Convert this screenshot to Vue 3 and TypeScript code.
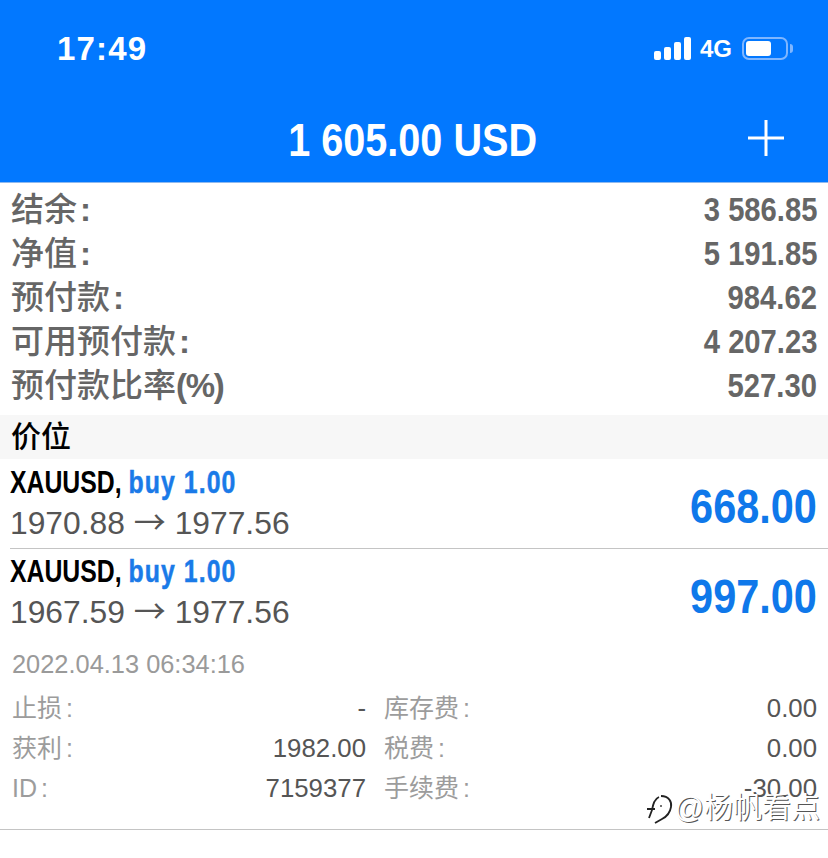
<template>
  <div class="screen">
    <header class="top">
      <div class="status">
        <span class="clock">17:49</span>
        <div class="status-right">
          <div class="signal"><i></i><i></i><i></i><i></i></div>
          <span class="net">4G</span>
          <div class="battery"><div class="battery-level"></div></div>
          <div class="battery-cap"></div>
        </div>
      </div>
      <div class="title-bar">
        <span class="title">1 605.00 USD</span>
        <svg class="plus" width="36" height="36" viewBox="0 0 36 36">
          <path d="M18 0V36M0 18H36" stroke="#fff" stroke-width="3" fill="none" />
        </svg>
      </div>
    </header>

    <section class="summary">
      <div v-for="row in summary" :key="row.label" class="summary-row">
        <span class="summary-label">{{ row.label }}<span v-if="row.colon" class="colon">:</span><span v-if="row.suffix" class="suffix">{{ row.suffix }}</span></span>
        <span class="summary-value">{{ row.value }}</span>
      </div>
    </section>

    <div class="section-head">价位</div>

    <div v-for="(p, i) in positions" :key="i" class="position" :class="{ last: i === positions.length - 1 }">
      <div class="pos-left">
        <div class="pos-name"><span class="pos-name-inner">XAUUSD, <span class="buy">buy 1.00</span></span></div>
        <div class="pos-price">{{ p.open }} <span class="arrow">→</span> {{ p.close }}</div>
      </div>
      <div class="pos-profit">{{ p.profit }}</div>
    </div>

    <div class="date">2022.04.13 06:34:16</div>

    <div class="details">
      <div v-for="d in details" :key="d.left" class="detail-row">
        <div class="detail-cell left-cell">
          <span class="detail-label">{{ d.left }}<span class="colon-small">:</span></span>
          <span>{{ d.leftValue }}</span>
        </div>
        <div class="detail-cell right-cell">
          <span class="detail-label">{{ d.right }}<span class="colon-small">:</span></span>
          <span>{{ d.rightValue }}</span>
        </div>
      </div>
      <div class="watermark">
        <svg class="watermark-icon" width="30" height="32" viewBox="0 0 30 32">
          <path d="M16 2C24 2 27 8 26 13C25 19 21 23 17 25L10 29M14 3C9 5 8 11 7 16L4 24M2 15H10" stroke="#222" stroke-width="1.8" fill="none" />
          <circle cx="16" cy="12" r="1" fill="#444" />
        </svg>
        <span>@杨帆看点</span>
      </div>
    </div>
  </div>
</template>

<script setup lang="ts">
const summary = [
  { label: '结余', value: '3 586.85', colon: true },
  { label: '净值', value: '5 191.85', colon: true },
  { label: '预付款', value: '984.62', colon: true },
  { label: '可用预付款', value: '4 207.23', colon: true },
  { label: '预付款比率', suffix: '(%)', value: '527.30', colon: false }
]

const positions = [
  { open: '1970.88', close: '1977.56', profit: '668.00' },
  { open: '1967.59', close: '1977.56', profit: '997.00' }
]

const details = [
  { left: '止损', leftValue: '-', right: '库存费', rightValue: '0.00' },
  { left: '获利', leftValue: '1982.00', right: '税费', rightValue: '0.00' },
  { left: 'ID', leftValue: '7159377', right: '手续费', rightValue: '-30.00' }
]
</script>

<style>
html,
body {
  margin: 0;
  background: #fff;
}
</style>

<style scoped>
.screen {
  width: 828px;
  height: 858px;
  overflow: hidden;
  background: #fff;
  font-family: 'Liberation Sans', 'Noto Sans CJK SC', sans-serif;
}

.top {
  height: 182px;
  background: #0278ff;
  border-bottom: 1px solid #8fb9ee;
  color: #fff;
}

.status {
  height: 97px;
  display: flex;
  align-items: center;
  justify-content: space-between;
  padding: 0 35px 0 57px;
}

.clock {
  font-size: 33px;
  font-weight: 700;
  letter-spacing: 1.2px;
}

.status-right {
  display: flex;
  align-items: center;
}

.signal {
  display: flex;
  align-items: flex-end;
  gap: 3px;
  height: 23px;
  margin-right: 9px;
}

.signal i {
  width: 7px;
  border-radius: 2px;
  background: #fff;
}

.signal i:nth-child(1) { height: 9px; }
.signal i:nth-child(2) { height: 13px; }
.signal i:nth-child(3) { height: 18px; }
.signal i:nth-child(4) { height: 23px; }

.net {
  font-size: 24px;
  font-weight: 700;
  margin-right: 10px;
}

.battery {
  width: 46px;
  height: 23px;
  box-sizing: border-box;
  border: 2px solid #7fb6ff;
  border-radius: 7px;
  padding: 2px;
}

.battery-level {
  width: 25px;
  height: 15px;
  background: #fff;
  border-radius: 3px;
}

.battery-cap {
  width: 3px;
  height: 9px;
  margin-left: 2px;
  background: #7fb6ff;
  border-radius: 0 3px 3px 0;
}

.title-bar {
  position: relative;
  height: 85px;
  display: flex;
  align-items: flex-start;
  justify-content: center;
}

.title {
  font-size: 47px;
  font-weight: 700;
  line-height: 54px;
  margin-top: 16px;
  margin-left: -2px;
  transform: scaleX(0.843);
}

.plus {
  position: absolute;
  right: 44px;
  top: 23px;
}

.summary {
  padding: 5px 11px 7px 11px;
  color: #666;
}

.summary-row {
  height: 44px;
  line-height: 40px;
  display: flex;
  align-items: center;
  justify-content: space-between;
  font-size: 33px;
}

.summary-label {
  font-weight: 500;
}

.colon {
  font-weight: 700;
  margin-left: 3px;
}

.suffix {
  font-weight: 700;
  letter-spacing: -1.3px;
}

.summary-value {
  font-weight: 700;
  transform: scaleX(0.885);
  transform-origin: right center;
}

.section-head {
  height: 44px;
  line-height: 44px;
  padding-left: 11px;
  background: #f7f7f7;
  color: #000;
  font-size: 30px;
  font-weight: 500;
}

.position {
  height: 90px;
  box-sizing: border-box;
  margin-left: 10px;
  padding-right: 11px;
  border-bottom: 1px solid #c4c4c4;
  display: flex;
  align-items: center;
  justify-content: space-between;
}

.position.last {
  height: 88px;
  border-bottom: none;
}

.pos-left {
  margin-top: -2px;
}

.pos-name {
  font-size: 32px;
  line-height: 38px;
  padding-bottom: 2px;
  color: #000;
  font-weight: 700;
}

.pos-name-inner {
  display: inline-block;
  transform: scaleX(0.775);
  transform-origin: left center;
  white-space: nowrap;
}

.buy {
  color: #1a7ae8;
  letter-spacing: 1.4px;
  -webkit-text-stroke: 0.5px #1a7ae8;
}

.pos-price {
  font-size: 31.8px;
  line-height: 40px;
  color: #555;
}

.arrow {
  font-family: 'Noto Sans CJK SC', sans-serif;
  font-size: 32px;
  font-weight: 400;
  line-height: 0;
}

.pos-profit {
  font-size: 48px;
  font-weight: 700;
  color: #0f78ea;
  margin-top: 6px;
  transform: scaleX(0.863);
  transform-origin: right center;
}

.date {
  padding: 9px 12px 0;
  height: 42px;
  line-height: 36px;
  font-size: 25.4px;
  color: #9a9a9a;
}

.details {
  position: relative;
  height: 142px;
  padding: 0 11px 0 12px;
  box-sizing: border-box;
  border-bottom: 1px solid #c4c4c4;
  font-size: 25.8px;
  color: #555;
}

.detail-row {
  height: 40px;
  line-height: 30px;
  display: flex;
  align-items: center;
  gap: 18px;
}

.detail-cell {
  display: flex;
  align-items: baseline;
  justify-content: space-between;
}

.left-cell {
  width: 354px;
}

.right-cell {
  flex: 1;
}

.detail-label {
  color: #9c9c9c;
  font-size: 25px;
}

.colon-small {
  margin-left: 4px;
}

.watermark {
  position: absolute;
  right: 8px;
  top: 96px;
  display: flex;
  align-items: center;
  font-size: 29px;
  color: #fff;
  text-shadow: 1px 1px 0 #555;
}

.watermark-icon {
  margin-top: 10px;
}
</style>
